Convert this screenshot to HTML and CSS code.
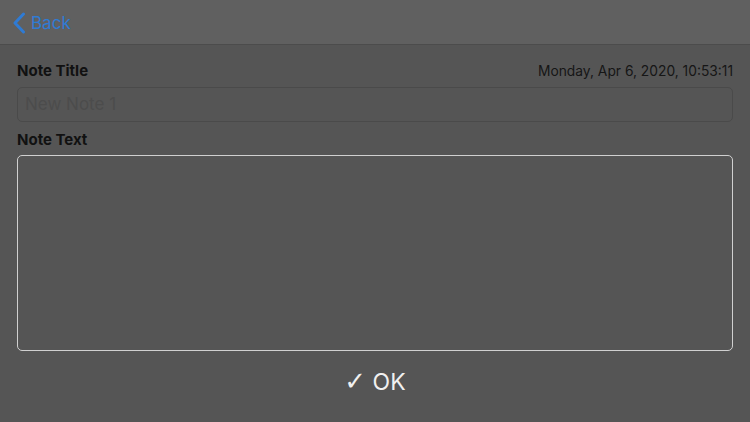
FILE: index.html
```html
<!DOCTYPE html>
<html>
<head>
<meta charset="utf-8">
<link rel="stylesheet" href="styles.css">
</head>
<body>
<header class="nav">
  <a class="back">
    <svg class="chev" width="14" height="22" viewBox="0 0 14 22"><path d="M11.5 2 L3 11 L11.5 20" fill="none" stroke="#2f7bd4" stroke-width="3" stroke-linecap="round" stroke-linejoin="round"/></svg>
    <span>Back</span>
  </a>
</header>
<main class="content">
  <div class="row">
    <label class="label">Note Title</label>
    <span class="date">Monday, Apr 6, 2020, 10:53:11</span>
  </div>
  <div class="title-input">New Note 1</div>
  <div class="label label-text">Note Text</div>
  <div class="textarea"></div>
  <div class="ok"><span class="check">✓</span> OK</div>
</main>
</body>
</html>
```
FILE: styles.css
```css
html, body {
  margin: 0;
  padding: 0;
}
body {
  width: 750px;
  height: 422px;
  background: #555555;
  font-family: Inter, "Liberation Sans", Arial, sans-serif;
  overflow: hidden;
}
.nav {
  height: 45px;
  background: #606060;
  border-bottom: 1px solid #4c4c4c;
  display: flex;
  align-items: center;
  padding-left: 12px;
  box-sizing: border-box;
}
.back {
  display: flex;
  align-items: center;
  gap: 5px;
  color: #2f7bd4;
  font-size: 17px;
  padding-top: 1px;
}
.content {
  padding: 0 17px;
}
.row {
  display: flex;
  justify-content: space-between;
  align-items: baseline;
  margin-top: 16px;
  height: 19px;
}
.label {
  font-weight: 700;
  font-size: 15px;
  color: #111;
}
.date {
  font-size: 13.8px;
  color: #161616;
}
.title-input {
  margin-top: 7px;
  height: 35px;
  box-sizing: border-box;
  border: 1px solid #4a4a4a;
  border-radius: 5px;
  padding-left: 7px;
  font-size: 17px;
  line-height: 33px;
  color: #4c4c4c;
}
.label-text {
  margin-top: 8px;
  height: 19px;
}
.textarea {
  margin-top: 6px;
  height: 196px;
  box-sizing: border-box;
  border: 1px solid #d0d0d0;
  border-radius: 5px;
}
.ok {
  text-align: center;
  font-size: 23px;
  line-height: 28px;
  color: #f0f0f0;
  margin-top: 16px;
}
.check {
  font-family: "DejaVu Sans", sans-serif;
  font-size: 26px;
}
```
